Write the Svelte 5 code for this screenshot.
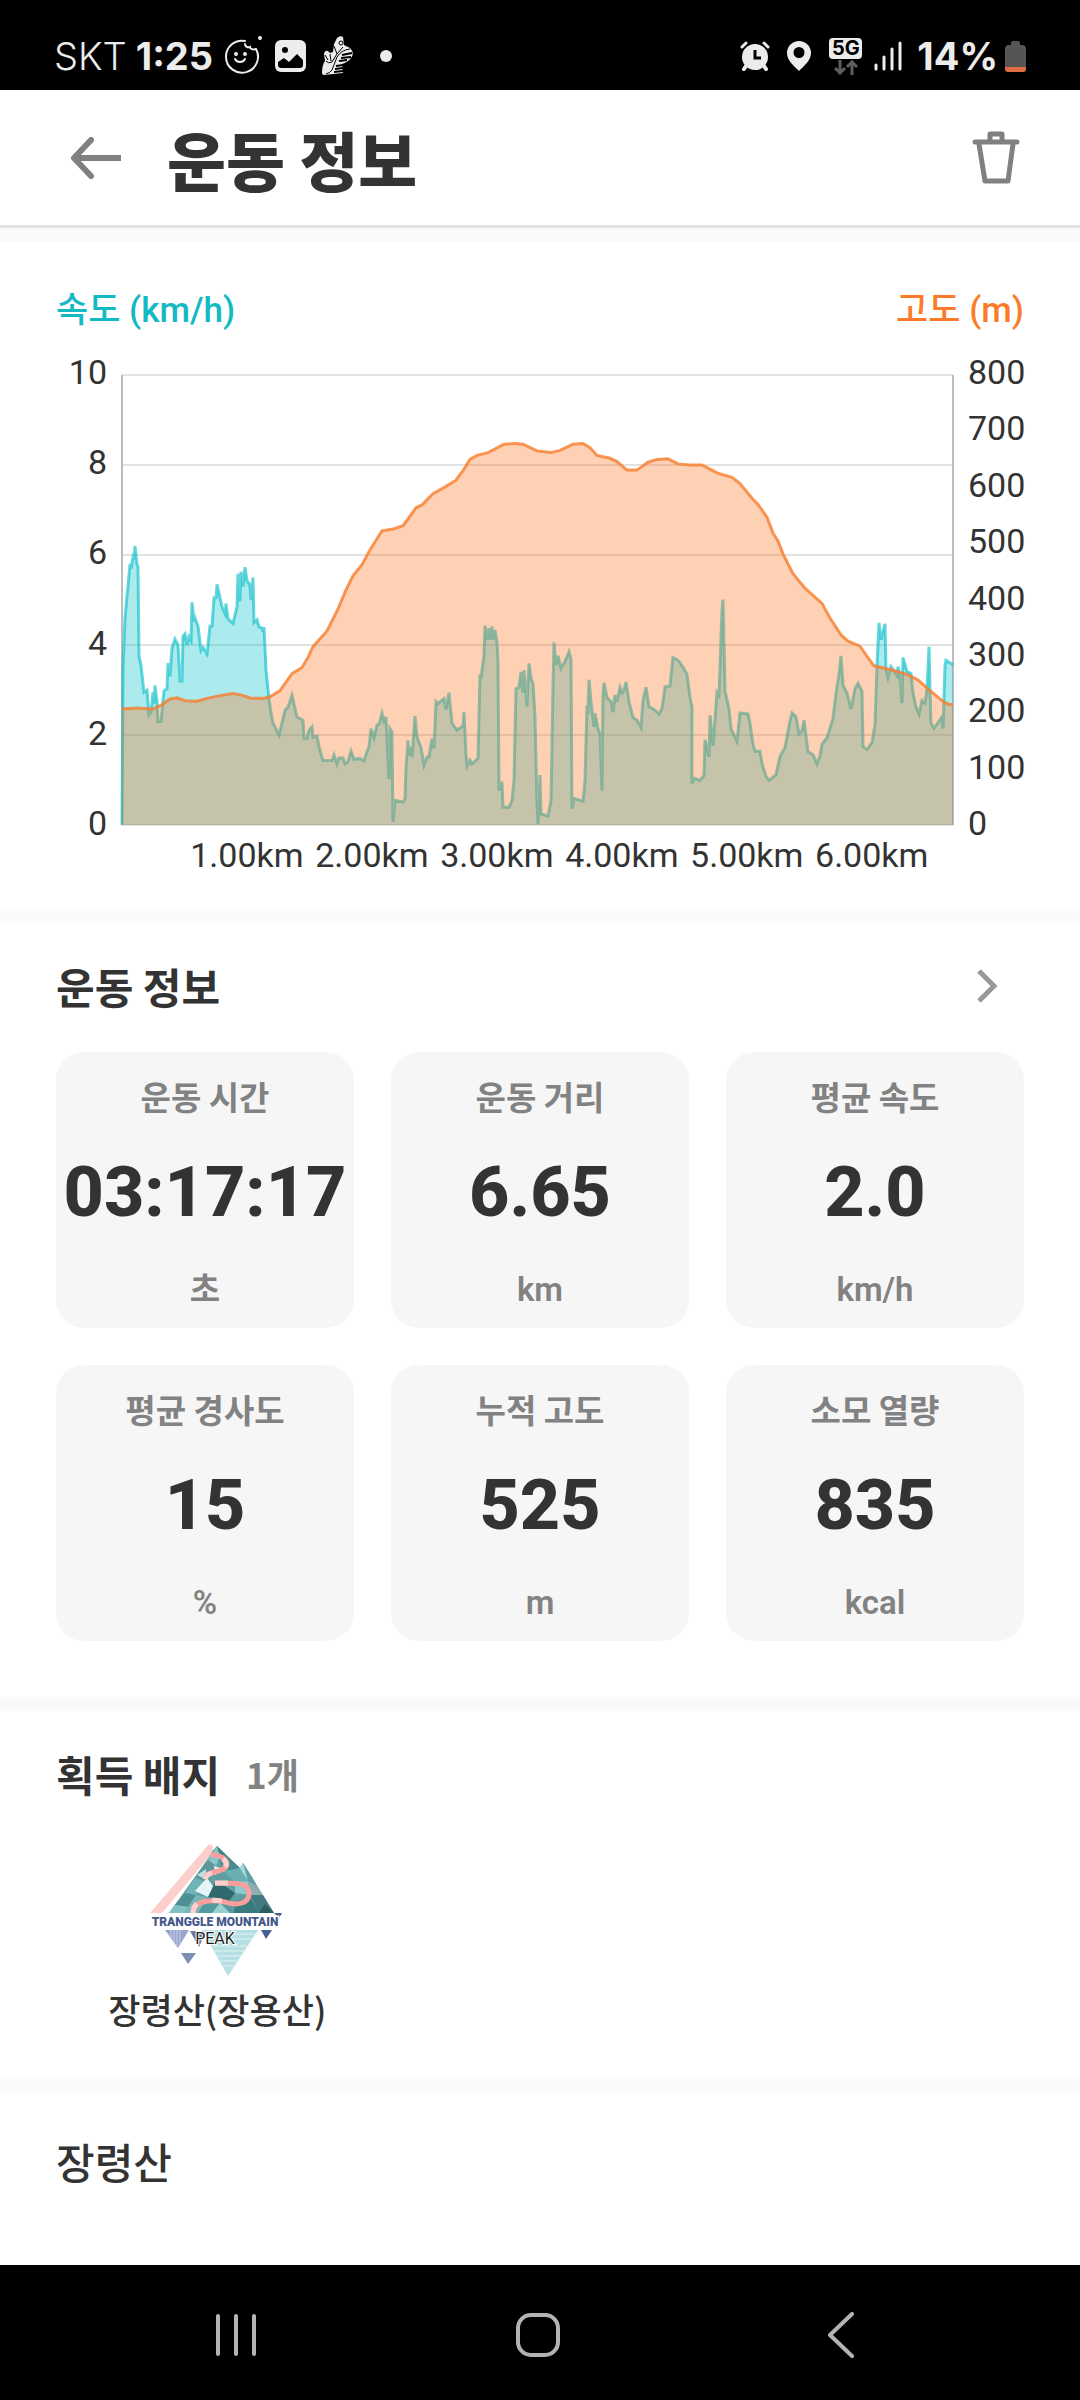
<script>
  const PLOT_W = 831;
  const PLOT_H = 450;

  // [distance along the plot, speed in km/h]
  const speed = [
    [0, 0], [1, 3.5], [3, 4.6], [5, 5.1], [6, 5.3], [8, 5.8], [9, 5.7], [11, 5.95], [12, 5.9], [13, 6.2],
    [15, 5.8], [16, 5.75], [17, 3.75], [19, 3.55], [22, 2.95], [25, 3], [27, 2.45], [29, 2.5], [31, 2.95], [32, 2.7],
    [33, 3.1], [35, 2.75], [36, 2.3], [39, 2.3], [42, 2.98], [45, 3.03], [46, 3.6], [48, 3.3], [50, 3.93], [53, 4.13],
    [56, 4], [58, 3.2], [60, 3.2], [61, 4.2], [63, 4.25], [65, 4], [67, 4.18], [69, 4.1], [70, 4.95], [72, 4.53],
    [73, 4.6], [76, 4.42], [79, 3.88], [81, 3.95], [85, 3.8], [88, 4.42], [90, 4.42], [92, 5.05], [94, 5.05], [95, 5.35],
    [100, 4.85], [103, 4.7], [104, 4.92], [106, 4.58], [111, 4.48], [115, 4.85], [116, 5.58], [118, 4.97], [119, 5.63], [121, 5.3],
    [123, 5.73], [125, 5.43], [128, 5.33], [129, 5], [131, 5.5], [132, 4.5], [135, 4.56], [137, 4.4], [140, 4.38], [141, 4.3],
    [142, 4.4], [144, 3.45], [147, 2.8], [149, 2.5], [151, 2.27], [157, 2], [160, 2.27], [163, 2.55], [166, 2.62], [170, 2.88],
    [175, 2.4], [181, 2.33], [182, 1.93], [185, 1.92], [187, 2.1], [190, 2.18], [191, 1.95], [195, 1.98], [197, 1.74], [201, 1.43],
    [210, 1.43], [212, 1.56], [215, 1.36], [217, 1.49], [221, 1.49], [223, 1.36], [226, 1.41], [229, 1.64], [232, 1.46], [238, 1.48],
    [242, 1.42], [245, 1.63], [247, 1.74], [249, 2.14], [252, 1.94], [255, 2.22], [257, 2.24], [260, 2.48], [262, 2.31], [264, 2.4],
    [267, 1.02], [268, 2.14], [270, 2.07], [271, 0.07], [273, 0.55], [281, 0.51], [283, 0.59], [284, 1.29], [286, 1.88], [287, 1.55],
    [289, 1.74], [290, 1.51], [293, 2.42], [295, 1.96], [299, 1.72], [302, 1.33], [305, 1.51], [307, 1.51], [310, 1.92], [312, 1.7],
    [314, 2.74], [316, 2.7], [322, 2.81], [324, 2.57], [327, 2.94], [330, 2.26], [335, 2.11], [341, 2.2], [342, 2.51], [344, 1.59],
    [345, 1.31], [348, 1.44], [350, 1.36], [356, 1.48], [358, 3.35], [359, 3.26], [362, 3.78], [363, 4.43], [365, 4.12], [367, 4.37],
    [368, 4.12], [370, 4.41], [371, 4.12], [373, 4.33], [375, 4.04], [376, 3.66], [377, 0.77], [380, 0.96], [381, 0.4], [387, 0.39],
    [390, 0.55], [392, 0.99], [394, 3.03], [397, 3.06], [399, 3.4], [401, 2.94], [402, 3.44], [405, 2.63], [407, 3.59], [409, 3.26],
    [411, 3.15], [413, 2.4], [415, 0.51], [416, 0.03], [418, 1.11], [419, 0.25], [426, 0.2], [429, 0.55], [431, 3.07], [432, 4.06],
    [434, 3.55], [436, 3.76], [439, 3.48], [443, 3.63], [447, 3.85], [449, 3.68], [450, 0.36], [452, 0.59], [461, 0.53], [463, 0.99],
    [465, 2.66], [466, 2.46], [467, 3.23], [469, 2.74], [472, 2.18], [473, 2.48], [476, 2.14], [478, 2.03], [480, 0.77], [481, 2.92],
    [482, 3.16], [485, 2.83], [489, 2.74], [491, 2.51], [493, 2.89], [495, 2.74], [498, 3.06], [500, 2.94], [502, 3], [504, 3.18],
    [507, 2.74], [511, 2.39], [515, 2.33], [519, 2.17], [521, 2.77], [524, 3.06], [527, 2.63], [533, 2.55], [537, 2.46], [540, 2.59],
    [543, 3.07], [548, 3.09], [551, 3.72], [555, 3.68], [558, 3.61], [562, 3.47], [565, 3.35], [568, 2.84], [570, 2.62], [570, 0.92],
    [572, 1.04], [578, 0.99], [582, 1.1], [583, 1.89], [587, 1.52], [588, 2.44], [591, 1.76], [595, 2.95], [597, 2.88], [600, 4.78],
    [601, 5.01], [603, 2.97], [607, 2.59], [609, 2.14], [615, 1.86], [618, 2.49], [626, 2.47], [628, 2.27], [631, 1.79], [633, 1.64],
    [638, 1.64], [640, 1.37], [644, 1.08], [647, 0.99], [654, 1.12], [658, 1.52], [663, 1.72], [668, 2.31], [670, 2.49], [674, 2.4],
    [677, 2.03], [680, 2.09], [682, 2.33], [686, 1.63], [691, 1.56], [695, 1.36], [698, 1.54], [700, 1.79], [705, 1.94], [711, 2.36],
    [714, 2.93], [717, 3.35], [719, 3.76], [721, 3.1], [725, 2.93], [729, 2.58], [733, 3.03], [736, 3.15], [740, 2.97], [741, 1.74],
    [745, 1.68], [750, 1.83], [753, 2.23], [755, 3.54], [757, 4.49], [759, 4.12], [763, 4.47], [764, 3.46], [766, 3.28], [769, 3.52],
    [775, 3.32], [776, 3.52], [778, 3.28], [780, 2.71], [781, 3.72], [785, 3.41], [789, 3.37], [791, 2.93], [794, 2.62], [797, 2.46],
    [800, 2.77], [803, 2.71], [805, 3.02], [807, 3.96], [808, 3.02], [809, 2.27], [812, 2.15], [820, 2.4], [821, 2.14], [823, 3.54],
    [824, 3.66], [831, 3.56]
  ];

  // [distance along the plot, altitude in m]
  const altitude = [
    [0, 206], [15, 208], [31, 206], [40, 214], [48, 224], [55, 226], [63, 221], [75, 220], [85, 225], [98, 230],
    [111, 234], [120, 231], [128, 226], [141, 225], [148, 228], [158, 239], [170, 269], [180, 280], [186, 298], [191, 317],
    [205, 345], [216, 384], [223, 414], [231, 443], [240, 463], [248, 489], [260, 523], [271, 526], [281, 532], [286, 544],
    [294, 564], [300, 569], [311, 589], [321, 599], [334, 613], [341, 630], [348, 650], [355, 657], [366, 662], [382, 677],
    [393, 678], [401, 677], [415, 665], [429, 662], [438, 666], [451, 677], [461, 678], [468, 671], [475, 657], [488, 652],
    [495, 646], [505, 631], [515, 631], [526, 645], [535, 650], [546, 651], [556, 642], [568, 640], [580, 640], [595, 626],
    [610, 618], [618, 607], [630, 581], [636, 570], [645, 547], [651, 519], [656, 505], [661, 482], [671, 447], [683, 421],
    [700, 394], [708, 368], [719, 338], [726, 327], [738, 318], [745, 300], [752, 283], [771, 275], [785, 268], [796, 258],
    [806, 242], [821, 220], [827, 214], [831, 214]
  ];

  const line = (data, max) =>
    data.map(([x, v], i) => `${i ? 'L' : 'M'}${x} ${(PLOT_H * (1 - v / max)).toFixed(1)}`).join('');
  const area = (data, max) => `${line(data, max)}V${PLOT_H}H0Z`;

  const speedTicks = [10, 8, 6, 4, 2, 0];
  const altitudeTicks = [800, 700, 600, 500, 400, 300, 200, 100, 0];
  const kmTicks = ['1.00km', '2.00km', '3.00km', '4.00km', '5.00km', '6.00km'];

  const stats = [
    { label: '운동 시간', value: '03:17:17', unit: '초' },
    { label: '운동 거리', value: '6.65', unit: 'km' },
    { label: '평균 속도', value: '2.0', unit: 'km/h' },
    { label: '평균 경사도', value: '15', unit: '%' },
    { label: '누적 고도', value: '525', unit: 'm' },
    { label: '소모 열량', value: '835', unit: 'kcal' }
  ];
</script>

<div class="page">
  <div class="status">
    <div class="status-left">
      <span class="carrier">SKT</span>
      <span class="clock">1:25</span>
      <svg class="cookie" width="42" height="42" viewBox="0 0 42 42" fill="none" stroke="#ececec" stroke-width="2" stroke-linecap="round">
        <path d="M24 7a16 16 0 1 0 11 8c-3 1-6 0-6-2-3 1-5-1-5-3" />
        <circle cx="15" cy="20" r="1" fill="#ececec" />
        <circle cx="24" cy="20" r="1" fill="#ececec" />
        <path d="M14 25c2 4 8 4 10 0" />
        <circle cx="39" cy="4" r="2" fill="#ececec" stroke="none" />
      </svg>
      <svg class="photo" width="31" height="32" viewBox="0 0 31 32">
        <rect width="31" height="32" rx="6" fill="#ececec" />
        <circle cx="10" cy="10" r="3" fill="#000" />
        <path d="M3 22l6-4 5 4 8-8 6 6v5q0 3-3 3H6q-3 0-3-3z" fill="#000" />
      </svg>
      <svg class="shoe" width="32" height="40" viewBox="0 0 32 40">
        <path d="M15 2q3-3 6-1l1 8 6 3q5 5 1 10-3 4-9 6l1 9-19 2q-2 0-2-2 0-8 3-12l-1-7q1-4 4-3l2 2q3-1 3-1l1-8z" fill="#ececec" />
        <g stroke="#000" stroke-width="1" fill="none">
          <path d="M28 13q-9 1-13 8-3 8-5 13-2 3-6 4" />
          <path d="M4 25q2 3 6 1 4-8 11-15" />
          <path d="M3 19l3 5M8 18l1 7M12 10l3 8" />
          <circle cx="19" cy="7" r="2" />
        </g>
        <path d="M20 19l10-2M19 22l10-1M17 25l8-1M14 30l7-1M13 33l8-1M12 36l9-1" stroke="#000" stroke-width="2" />
      </svg>
      <span class="more-dot"></span>
    </div>
    <div class="status-right">
      <svg width="30" height="30" viewBox="0 0 30 30" fill="none" stroke="#ececec" stroke-linecap="round">
        <circle cx="15" cy="16" r="13" fill="#ececec" stroke="none" />
        <path d="M2 6l4-4M28 6l-4-4" stroke-width="3" />
        <path d="M6 25l-2 3M24 25l2 3" stroke-width="4" />
        <path d="M15 9v8h6" stroke="#000" stroke-width="3" stroke-linecap="butt" />
      </svg>
      <svg class="pin" width="24" height="30" viewBox="0 0 24 30">
        <path fill="#ececec" fill-rule="evenodd" d="M12 0a12 12 0 0 1 12 12c0 7-6 12-12 18C6 24 0 19 0 12A12 12 0 0 1 12 0zm0 6a5 5 0 1 0 0 11 5 5 0 0 0 0-11z" />
      </svg>
      <div class="network">
        <span class="gen">5G</span>
        <svg width="24" height="15" viewBox="0 0 24 15" fill="none" stroke="#5e5e5e" stroke-width="3">
          <path d="M6 0v13M1 8l5 5 5-5M18 15V2M13 7l5-5 5 5" />
        </svg>
      </div>
      <svg class="signal" width="28" height="30" viewBox="0 0 28 30" stroke="#ececec" stroke-width="3" stroke-linecap="round">
        <path d="M2 24v4M10 16v12M18 8v20M26 2v26" />
      </svg>
      <span class="percent">14%</span>
      <svg class="battery" width="21" height="31" viewBox="0 0 21 31">
        <path d="M6 2q0-2 2-2h5q2 0 2 2v2h2q4 0 4 4v18H0V8q0-4 4-4h2z" fill="#555" />
        <path d="M0 26h21v2q0 3-3 3H3q-3 0-3-3z" fill="#e06c43" />
      </svg>
    </div>
  </div>

  <header class="topbar">
    <button class="icon-btn" aria-label="뒤로">
      <svg width="52" height="42" viewBox="0 0 52 42" fill="none" stroke="#808080" stroke-width="6" stroke-linecap="round" stroke-linejoin="round">
        <path d="M21 3L4 21l17 18" />
        <path d="M4 21h47" stroke-linecap="butt" />
      </svg>
    </button>
    <h1>운동 정보</h1>
    <button class="icon-btn" aria-label="삭제">
      <svg width="48" height="53" viewBox="0 0 48 53" fill="none" stroke="#808080" stroke-width="5" stroke-linecap="round" stroke-linejoin="round">
        <path d="M3 11h42M18 10V3h12v7" />
        <path d="M7 13l6 37h23l5-37" />
      </svg>
    </button>
  </header>

  <main>
    <section class="chart">
      <div class="legend">
        <span class="speed-name">속도 (km/h)</span>
        <span class="altitude-name">고도 (m)</span>
      </div>
      <div class="chart-grid">
        <div class="ticks left">
          {#each speedTicks as t}<span>{t}</span>{/each}
        </div>
        <svg class="plot" viewBox="0 0 {PLOT_W} {PLOT_H}" preserveAspectRatio="none" role="img" aria-label="속도와 고도">
          {#each speedTicks as t}
            <path class="gridline" d="M0 {PLOT_H * (1 - t / 10)}H{PLOT_W}" />
          {/each}
          <path class="axis" d="M0 0V{PLOT_H}M{PLOT_W} 0V{PLOT_H}" />
          <path class="speed-area" d={area(speed, 10)} />
          <path class="speed-line" d={line(speed, 10)} />
          <path class="altitude-area" d={area(altitude, 800)} />
          <path class="altitude-line" d={line(altitude, 800)} />
        </svg>
        <div class="ticks right">
          {#each altitudeTicks as t}<span>{t}</span>{/each}
        </div>
        <div class="km">
          {#each kmTicks as t}<span>{t}</span>{/each}
        </div>
      </div>
    </section>

    <section class="info">
      <div class="section-head">
        <h2>운동 정보</h2>
        <button class="icon-btn chevron" aria-label="더보기">
          <svg width="22" height="36" viewBox="0 0 22 36" fill="none" stroke="#999" stroke-width="5">
            <path d="M3 3l15 15L3 33" />
          </svg>
        </button>
      </div>
      <div class="cards">
        {#each stats as s}
          <div class="card">
            <span class="label">{s.label}</span>
            <strong>{s.value}</strong>
            <span class="unit">{s.unit}</span>
          </div>
        {/each}
      </div>
    </section>

    <section class="badges">
      <div class="section-head">
        <h2>획득 배지</h2>
        <span class="count">1개</span>
      </div>
      <div class="badge-grid">
        <figure>
          <svg width="134" height="134" viewBox="0 0 134 134">
            <path d="M59 0l4 2v6L12 69H0z" fill="#fdcfcc" />
            <path d="M67 2l23 22 3-5 31 50H19z" fill="#5f9fa2" />
            <path d="M67 2l8 8-7 8-6-10z" fill="#3f8084" />
            <path d="M67 2l-9 14 8 6 4-9z" fill="#86c6c9" />
            <path d="M75 10l15 14-9 7-11-12z" fill="#4b8a8e" />
            <path d="M93 19l9 14-12 6-5-9z" fill="#a5d9db" />
            <path d="M93 19l9 14 5 9-9-5z" fill="#5aa0a4" />
            <path d="M58 16l-13 18 12 2 9-14z" fill="#5c979c" />
            <path d="M47 31l9-6 1 11z" fill="#b8e2e2" />
            <path d="M64 22l10 3-9 6z" fill="#e8f6f6" />
            <path d="M45 34l12 4-11 13-11-2z" fill="#6fb4b7" />
            <path d="M57 34l9 12-8 7-13-6z" fill="#e6f6f8" />
            <path d="M35 49l11 2-6 12-15-2z" fill="#4f9094" />
            <path d="M25 61l15 2-6 6H19z" fill="#83c1c4" />
            <path d="M46 51l12 2-10 16H34z" fill="#79b7ba" />
            <path d="M66 36l19 13-7 9-20-5z" fill="#2f696d" />
            <path d="M74 27l16-3 8 13-13 2z" fill="#6ab0b3" />
            <path d="M85 39l13-2 2 14-15-2z" fill="#8dcace" />
            <path d="M98 37l9 5 6 9-13 2z" fill="#8faeb3" />
            <path d="M100 51l13 0 11 18h-15z" fill="#437a7f" />
            <path d="M109 69l6-9 9 9z" fill="#2d5d63" />
            <path d="M85 58l15-5 9 16H84z" fill="#397a7d" />
            <path d="M58 53l20 5 6 11H48z" fill="#559a9d" />
            <path d="M62 69l8-10 10 10z" fill="#9ad0d2" />
            <g fill="none" stroke="#fb9f9c" stroke-width="5">
              <path d="M61 11c10-1 20 7 14 13-6 5-19 3-20 11" />
              <path d="M65 39c13 1 32-3 34 9 1 14-16 13-24 10-12-2-31-3-32 11" />
            </g>
            <g fill="none" stroke="#ffd0cd" stroke-width="5">
              <path d="M73 15q5 4 2 8M62 29q-6 2-7 6M65 39l13 0M62 56l10 1M43 69q0-6 4-9" />
            </g>
            <path d="M124 69h8l-3 5z" fill="#45588a" />
            <path d="M15 86h24l-11 18z" fill="#98a5cf" />
            <path d="M21 86v9M24 86v13M27 86v17M30 86v15" stroke="#c9d0e8" stroke-width="1" />
            <path d="M40 87h16l-7 16z" fill="#6e7797" />
            <path d="M31 109h15l-8 11z" fill="#7c8fb2" />
            <path d="M111 86h11l-6 9z" fill="#466093" />
            <path d="M52 86h56l-30 46z" fill="#b5dfe2" />
            <path d="M82 90h24M82 95h20M62 102h38M64 107h32M67 112h26M70 117h20M73 122h14" stroke="#e2f4f5" stroke-width="1" />
            <text class="badge-name" x="65" y="82" text-anchor="middle">TRANGGLE MOUNTAIN</text>
            <text class="badge-peak" x="65" y="100" text-anchor="middle">PEAK</text>
          </svg>
          <figcaption>장령산(장용산)</figcaption>
        </figure>
      </div>
    </section>

    <section class="mountain">
      <h2>장령산</h2>
    </section>
  </main>

  <nav>
    <button aria-label="최근 앱">
      <svg width="42" height="44" viewBox="0 0 42 44" fill="none" stroke="#b3b3b3" stroke-width="4" stroke-linecap="round">
        <path d="M3 3v38M21 3v38M39 3v38" />
      </svg>
    </button>
    <button aria-label="홈">
      <svg width="44" height="44" viewBox="0 0 44 44" fill="none" stroke="#b3b3b3" stroke-width="4">
        <rect x="2" y="2" width="40" height="40" rx="13" />
      </svg>
    </button>
    <button aria-label="이전">
      <svg width="28" height="46" viewBox="0 0 28 46" fill="none" stroke="#b3b3b3" stroke-width="4" stroke-linecap="round" stroke-linejoin="round">
        <path d="M25 2L3 23l22 21" />
      </svg>
    </button>
  </nav>
</div>

<style>
  :global(body) {
    margin: 0;
    background: #fff;
  }
  .page {
    display: flex;
    flex-direction: column;
    min-height: 100vh;
    background: #fff;
    color: #333;
    font-family: "Noto Sans CJK KR", "Noto Sans", sans-serif;
  }
  svg {
    display: block;
    flex: none;
  }
  h1, h2, figure {
    margin: 0;
  }
  button {
    padding: 0;
    border: 0;
    background: none;
    cursor: pointer;
  }

  .status {
    display: flex;
    justify-content: space-between;
    align-items: center;
    height: 68px;
    padding: 22px 54px 0 54px;
    background: #000;
    color: #ececec;
    font-family: Inter, Roboto, sans-serif;
    font-size: 38px;
    line-height: 48px;
  }
  .status-left, .status-right {
    display: flex;
    align-items: center;
  }
  .carrier {
    font-weight: 300;
  }
  .clock {
    margin-left: 9px;
    font-weight: 700;
  }
  .cookie {
    margin: 0 0 3px 8px;
  }
  .photo {
    margin-left: 12px;
  }
  .shoe {
    margin-left: 16px;
  }
  .more-dot {
    width: 12px;
    height: 12px;
    margin-left: 26px;
    border-radius: 50%;
    background: #ececec;
  }
  .pin {
    margin-left: 17px;
  }
  .network {
    display: flex;
    flex-direction: column;
    align-items: center;
    gap: 1px;
    margin-left: 18px;
  }
  .gen {
    width: 33px;
    border-radius: 4px;
    background: #ececec;
    color: #000;
    font-size: 20px;
    font-weight: 700;
    line-height: 21px;
    text-align: center;
  }
  .signal {
    margin-left: 12px;
  }
  .percent {
    margin-left: 15px;
    font-weight: 700;
  }
  .battery {
    margin-left: 7px;
  }

  .topbar {
    display: flex;
    align-items: center;
    height: 135px;
    padding: 0 60px 0 70px;
    border-bottom: 3px solid #e4e4e4;
  }
  h1 {
    flex: 1;
    margin-left: 45px;
    font-size: 64px;
    font-weight: 900;
    line-height: 96px;
  }

  section {
    padding: 0 56px;
    border-top: 14px solid #fafafa;
  }
  h2 {
    font-size: 42px;
    font-weight: 700;
    line-height: 60px;
  }
  .section-head {
    display: flex;
    align-items: center;
  }

  .chart {
    padding-top: 45px;
    padding-bottom: 34px;
  }
  .legend {
    display: flex;
    justify-content: space-between;
    font-family: Roboto, "Noto Sans CJK KR", sans-serif;
    font-size: 35px;
    font-weight: 500;
    line-height: 48px;
  }
  .speed-name {
    color: #13b9c3;
  }
  .altitude-name {
    color: #fb7b28;
  }
  .chart-grid {
    display: grid;
    grid-template-columns: 51px 1fr 56px;
    column-gap: 15px;
    row-gap: 10px;
    margin-top: 40px;
    font-family: Roboto, sans-serif;
    font-size: 34px;
    line-height: 40px;
  }
  .plot {
    width: 100%;
    height: 450px;
    overflow: visible;
  }
  .plot path {
    fill: none;
    stroke-width: 2px;
    vector-effect: non-scaling-stroke;
  }
  .plot .gridline {
    stroke: #e2e2e2;
  }
  .plot .axis {
    stroke: #bdbdbd;
  }
  .plot .speed-area {
    fill: rgba(0, 195, 204, 0.33);
  }
  .plot .speed-line {
    stroke: rgba(0, 188, 198, 0.6);
    stroke-width: 3px;
  }
  .plot .altitude-area {
    fill: rgba(253, 116, 31, 0.33);
  }
  .plot .altitude-line {
    stroke: rgba(247, 125, 45, 0.8);
    stroke-width: 3px;
  }
  .ticks {
    display: flex;
    flex-direction: column;
    justify-content: space-between;
    margin: -23px 0 -18px;
  }
  .left {
    text-align: right;
  }
  .km {
    display: flex;
    grid-column: 2;
    padding-left: 7.519%;
  }
  .km span {
    flex: 0 0 16.26%;
    text-align: center;
    white-space: nowrap;
  }

  .info {
    padding-top: 33px;
    padding-bottom: 56px;
  }
  .chevron {
    margin: 0 26px 0 auto;
  }
  .cards {
    display: grid;
    grid-template-columns: repeat(3, minmax(0, 1fr));
    gap: 37px;
    margin-top: 36px;
  }
  .card {
    display: flex;
    flex-direction: column;
    align-items: center;
    padding: 20px 0 14px;
    border-radius: 28px;
    background: #f6f6f6;
  }
  .label, .unit {
    color: #828282;
    font-size: 33px;
    font-weight: 700;
    line-height: 48px;
  }
  .unit {
    font-family: Roboto, "Noto Sans CJK KR", sans-serif;
    font-weight: 600;
  }
  strong {
    margin: 24px 0 26px;
    font-family: Roboto, sans-serif;
    font-size: 70px;
    font-weight: 800;
    line-height: 96px;
  }

  .badges {
    padding-top: 33px;
    padding-bottom: 45px;
  }
  .count {
    margin-left: 26px;
    color: #828282;
    font-size: 35px;
    font-weight: 700;
    line-height: 60px;
  }
  .badge-grid {
    display: grid;
    grid-template-columns: repeat(3, minmax(0, 1fr));
    margin-top: 40px;
  }
  figure {
    display: flex;
    flex-direction: column;
    align-items: center;
    gap: 6px;
  }
  figcaption {
    font-size: 35px;
    font-weight: 500;
    line-height: 50px;
  }
  .badge-name {
    fill: #45588a;
    stroke: #fff;
    stroke-width: 3px;
    paint-order: stroke;
    font-family: Roboto, sans-serif;
    font-size: 12px;
    font-weight: 900;
  }
  .badge-peak {
    fill: #222;
    stroke: #fff;
    stroke-width: 2px;
    paint-order: stroke;
    font-family: Roboto, sans-serif;
    font-size: 16px;
    font-weight: 400;
  }

  .mountain {
    padding-top: 38px;
    padding-bottom: 40px;
  }
  .mountain h2 {
    font-weight: 500;
  }

  nav {
    display: grid;
    grid-template-columns: repeat(3, 1fr);
    height: 135px;
    margin-top: auto;
    padding: 4px 88px 0 85px;
    box-sizing: border-box;
    background: #000;
  }
  nav button {
    display: flex;
    align-items: center;
    justify-content: center;
  }
</style>
